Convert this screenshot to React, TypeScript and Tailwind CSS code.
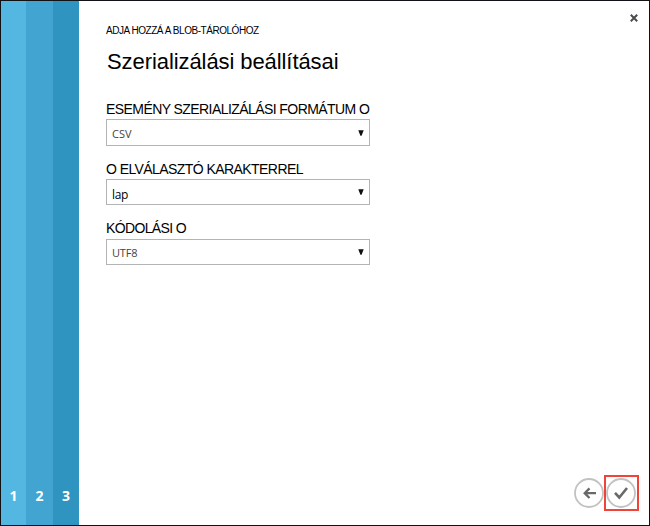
import React from "react";

type FieldProps = {
  label: string;
  value: string;
  labelClass: string;
  boxClass: string;
  valueClass: string;
  className: string;
};

function Field({ label, value, labelClass, boxClass, valueClass, className }: FieldProps) {
  return (
    <div className={`w-[264px] ${className}`}>
      <div className={`h-[18px] whitespace-nowrap text-[14px] leading-[18px] text-black ${labelClass}`}>{label}</div>
      <div className={`flex w-[264px] items-center justify-between border border-[#b4b4b4] bg-white px-[5px] ${boxClass}`}>
        <span className={`whitespace-nowrap leading-[16px] ${valueClass}`}>{value}</span>
        <svg width="6" height="6" viewBox="0 0 6 6">
          <path d="M0.3 0.3H5.7L3.6 5.7H2.4Z" fill="#111" />
        </svg>
      </div>
    </div>
  );
}

function Step({ number, className }: { number: string; className: string }) {
  return (
    <div className={`flex items-end justify-center pb-[19px] font-['Open_Sans',sans-serif] text-[14px] leading-[20px] font-bold text-white ${className}`}>
      {number}
    </div>
  );
}

export default function App() {
  return (
    <div className="flex h-[526px] w-[650px] overflow-hidden border border-[#111216] bg-white font-['Liberation_Sans',sans-serif]">
      <aside className="flex w-[78px] shrink-0">
        <Step number="1" className="w-[25px] bg-[#53b7e2]" />
        <Step number="2" className="w-[27px] bg-[#42a5d1]" />
        <Step number="3" className="w-[26px] bg-[#3094c0]" />
      </aside>
      <main className="flex grow flex-col pl-[27px]">
        <header className="flex justify-between">
          <div>
            <div className="mt-[23px] h-[13px] text-[10px] leading-[13px] tracking-[-0.46px] whitespace-nowrap text-black">ADJA HOZZÁ A BLOB-TÁROLÓHOZ</div>
            <h1 className="mt-[12px] ml-[1px] h-[26px] text-[22px] leading-[26px] tracking-[-0.08px] whitespace-nowrap text-black">Szerializálási beállításai</h1>
          </div>
          <button aria-label="Bezárás" className="mt-[13px] mr-[11px] h-[8px] w-[8px]">
            <svg width="8" height="8" viewBox="0 0 8 8" className="block">
              <path d="M0.8 0.8L7.2 7.2M7.2 0.8L0.8 7.2" stroke="#4b4b4b" strokeWidth="2" />
            </svg>
          </button>
        </header>
        <Field className="mt-[25px]" label="ESEMÉNY SZERIALIZÁLÁSI FORMÁTUM O" value="CSV" labelClass="tracking-[-0.57px]" boxClass="mt-[1px] h-[27px]" valueClass="font-['Open_Sans',sans-serif] text-[11px] text-[#444] pt-[2px]" />
        <Field className="mt-[14px]" label="O ELVÁLASZTÓ KARAKTERREL" value="lap" labelClass="tracking-[-0.57px]" boxClass="mt-[1px] h-[26px]" valueClass="font-['Open_Sans',sans-serif] text-[12px] tracking-[-0.4px] text-black pt-[5px]" />
        <Field className="mt-[14px]" label="KÓDOLÁSI O" value="UTF8" labelClass="tracking-[-0.64px]" boxClass="mt-[2px] h-[26px]" valueClass="font-['Open_Sans',sans-serif] text-[11px] tracking-[-0.2px] text-[#444] pt-[2px]" />
        <footer className="mt-auto mr-[10px] mb-[14px] flex items-center justify-end">
          <button aria-label="Vissza">
            <svg width="30" height="30" viewBox="0 0 30 30" className="block">
              <circle cx="15" cy="15" r="14" fill="#fff" stroke="#c2c2c2" strokeWidth="1.8" />
              <path d="M22 15.2H11M15.5 10.4L10.7 15.2L15.5 20" fill="none" stroke="#696969" strokeWidth="2.3" />
            </svg>
          </button>
          <button aria-label="Kész" className="border-2 border-[#f04438]">
            <svg width="31" height="32" viewBox="0 0 31 32" className="block">
              <circle cx="15" cy="16" r="14" fill="#fff" stroke="#c2c2c2" strokeWidth="1.8" />
              <path d="M9 15.8L13.3 20.5L21 11" fill="none" stroke="#696969" strokeWidth="2.6" />
            </svg>
          </button>
        </footer>
      </main>
    </div>
  );
}
